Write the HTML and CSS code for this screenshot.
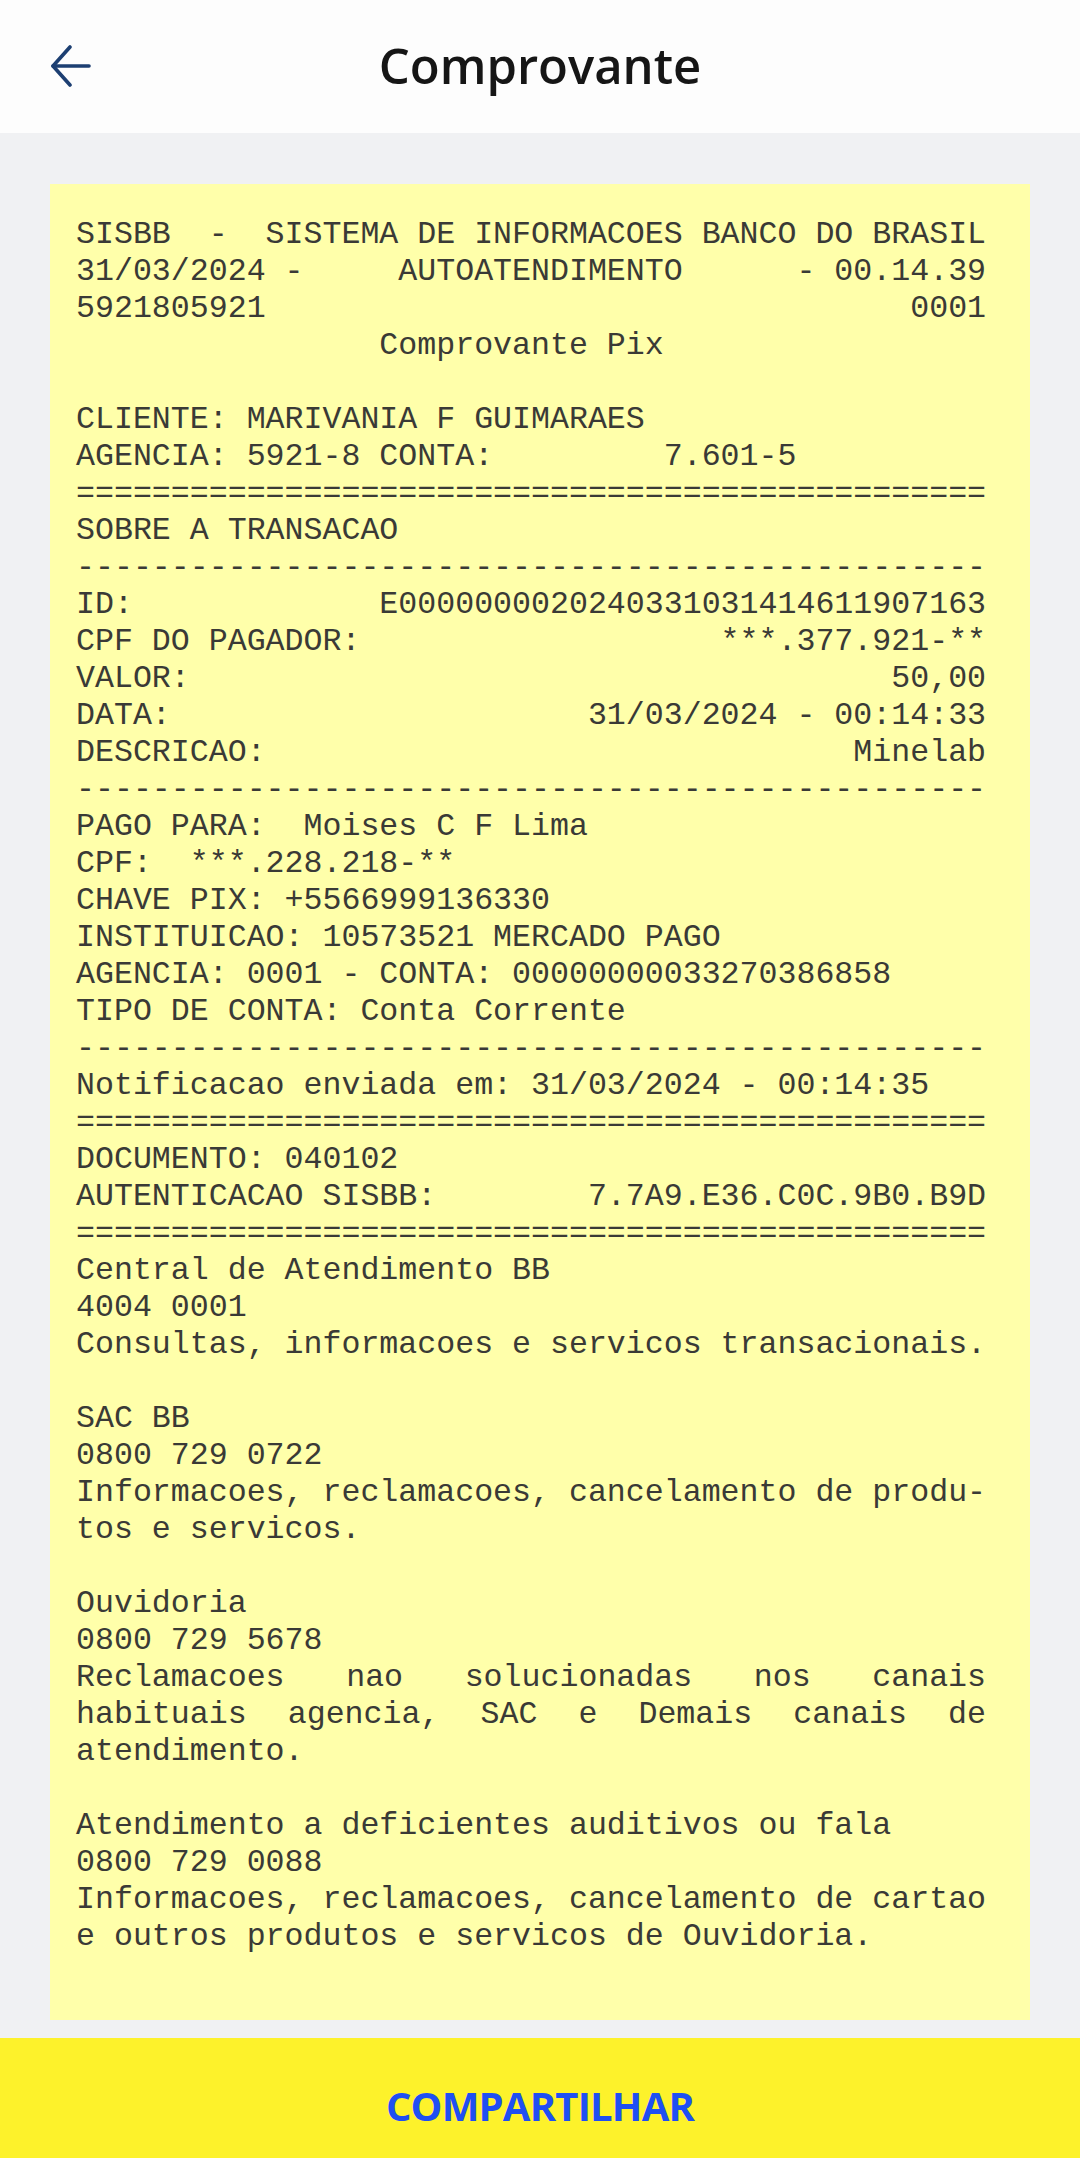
FILE: index.html
```html
<!DOCTYPE html>
<html lang="pt-BR">
<head>
<meta charset="utf-8">
<title>Comprovante</title>
<link rel="stylesheet" href="styles.css">
</head>
<body>
<div class="app">
  <header class="topbar">
    <button class="back" aria-label="Voltar">
      <svg width="40" height="42" viewBox="0 0 40 42" fill="none" stroke="#1d3f72" stroke-width="3.6" stroke-linecap="round" stroke-linejoin="round">
        <path d="M19 2 L2 21 L19 40"/>
        <path d="M2 21 H38"/>
      </svg>
    </button>
    <h1 class="title">Comprovante</h1>
  </header>

  <main class="content">
    <section class="receipt">
      <div class="lines">
        <div class="ln">SISBB  -  SISTEMA DE INFORMACOES BANCO DO BRASIL</div>
        <div class="ln">31/03/2024 -     AUTOATENDIMENTO      - 00.14.39</div>
        <div class="ln">5921805921                                  0001</div>
        <div class="ln">                Comprovante Pix</div>
        <div class="ln"> </div>
        <div class="ln">CLIENTE: MARIVANIA F GUIMARAES</div>
        <div class="ln">AGENCIA: 5921-8 CONTA:         7.601-5</div>
        <div class="ln">================================================</div>
        <div class="ln">SOBRE A TRANSACAO</div>
        <div class="ln">------------------------------------------------</div>
        <div class="ln">ID:             E0000000020240331031414611907163</div>
        <div class="ln">CPF DO PAGADOR:                   ***.377.921-**</div>
        <div class="ln">VALOR:                                     50,00</div>
        <div class="ln">DATA:                      31/03/2024 - 00:14:33</div>
        <div class="ln">DESCRICAO:                               Minelab</div>
        <div class="ln">------------------------------------------------</div>
        <div class="ln">PAGO PARA:  Moises C F Lima</div>
        <div class="ln">CPF:  ***.228.218-**</div>
        <div class="ln">CHAVE PIX: +5566999136330</div>
        <div class="ln">INSTITUICAO: 10573521 MERCADO PAGO</div>
        <div class="ln">AGENCIA: 0001 - CONTA: 00000000033270386858</div>
        <div class="ln">TIPO DE CONTA: Conta Corrente</div>
        <div class="ln">------------------------------------------------</div>
        <div class="ln">Notificacao enviada em: 31/03/2024 - 00:14:35</div>
        <div class="ln">================================================</div>
        <div class="ln">DOCUMENTO: 040102</div>
        <div class="ln">AUTENTICACAO SISBB:        7.7A9.E36.C0C.9B0.B9D</div>
        <div class="ln">================================================</div>
        <div class="ln">Central de Atendimento BB</div>
        <div class="ln">4004 0001</div>
        <div class="ln">Consultas, informacoes e servicos transacionais.</div>
        <div class="ln"> </div>
        <div class="ln">SAC BB</div>
        <div class="ln">0800 729 0722</div>
        <div class="ln">Informacoes, reclamacoes, cancelamento de produ-</div>
        <div class="ln">tos e servicos.</div>
        <div class="ln"> </div>
        <div class="ln">Ouvidoria</div>
        <div class="ln">0800 729 5678</div>
        <div class="ln just">Reclamacoes nao solucionadas nos canais</div>
        <div class="ln just">habituais agencia, SAC e Demais canais de</div>
        <div class="ln">atendimento.</div>
        <div class="ln"> </div>
        <div class="ln">Atendimento a deficientes auditivos ou fala</div>
        <div class="ln">0800 729 0088</div>
        <div class="ln">Informacoes, reclamacoes, cancelamento de cartao</div>
        <div class="ln">e outros produtos e servicos de Ouvidoria.</div>
      </div>
    </section>
  </main>

  <footer class="actions">
    <button class="share">COMPARTILHAR</button>
  </footer>
</div>
</body>
</html>
```

FILE: styles.css
```css
* {
  box-sizing: border-box;
}

html, body {
  margin: 0;
  padding: 0;
  background: #f0f1f3;
}

.app {
  width: 1080px;
  min-height: 2158px;
  display: flex;
  flex-direction: column;
}

.topbar {
  height: 133px;
  background: #fdfdfd;
  display: flex;
  align-items: center;
  justify-content: center;
  position: relative;
}

.back {
  position: absolute;
  left: 50px;
  top: 44px;
  width: 42px;
  height: 44px;
  padding: 0;
  margin: 0;
  border: 0;
  background: transparent;
  display: flex;
  align-items: center;
  justify-content: center;
}

.title {
  margin: 0;
  font-family: "Open Sans", "Noto Sans", sans-serif;
  font-weight: 600;
  font-size: 49px;
  color: #161616;
  letter-spacing: 0;
  line-height: 1;
  padding-bottom: 2px;
}

.content {
  flex: 1;
  padding: 51px 50px 18px 50px;
}

.receipt {
  background: #ffffaa;
  height: 1836px;
  padding: 32px 0 0 26px;
}

.lines {
  width: 48ch;
  font-family: "Liberation Mono", "DejaVu Sans Mono", monospace;
  font-size: 31.6px;
  line-height: 37px;
  color: #3a3a36;
}

.ln {
  white-space: pre;
  height: 37px;
}

.ln.just {
  white-space: normal;
  text-align: justify;
  text-align-last: justify;
}

.actions {
  height: 120px;
  background: #fdf22b;
  display: flex;
  align-items: center;
  justify-content: center;
  padding-top: 16px;
}

.share {
  border: 0;
  background: transparent;
  padding: 0;
  font-family: "Open Sans", "Noto Sans", sans-serif;
  font-weight: 700;
  font-size: 40px;
  letter-spacing: -0.8px;
  color: #1f4ff2;
  line-height: 1;
}
```
